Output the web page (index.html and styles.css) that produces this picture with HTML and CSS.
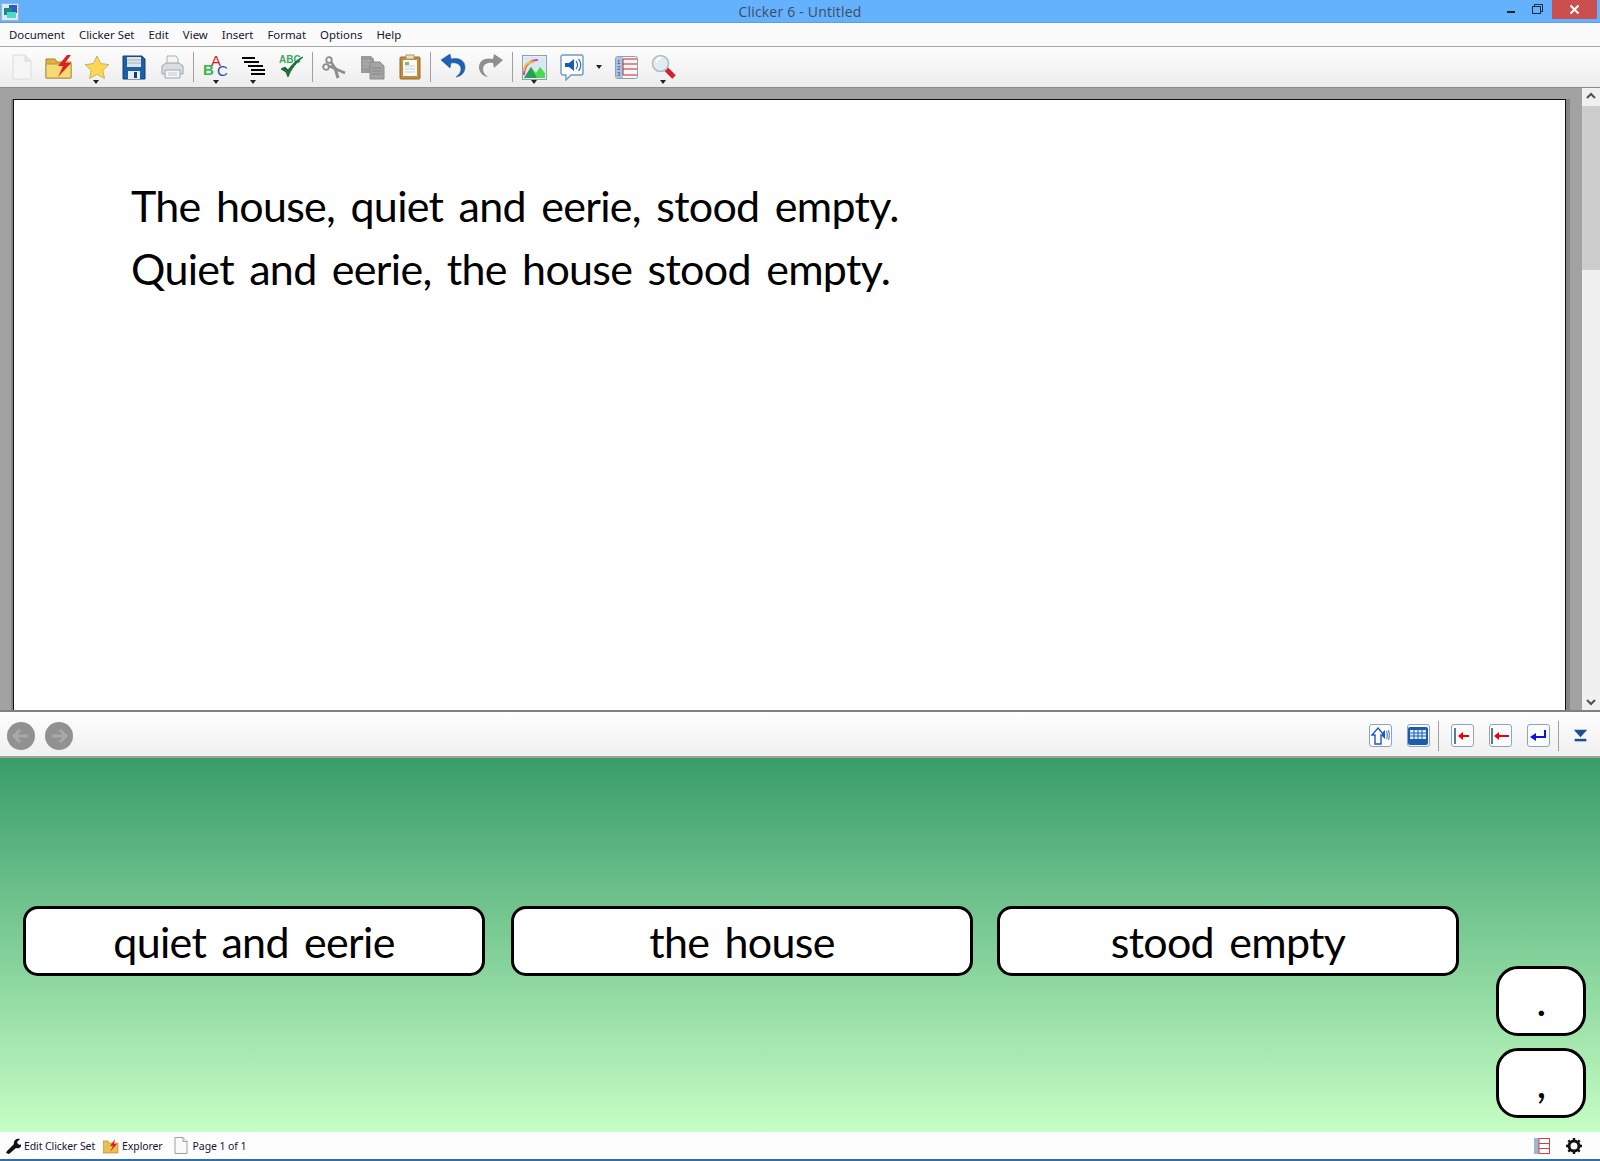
FILE: index.html
```html
<!DOCTYPE html>
<html lang="en">
  <head>
    <meta charset="UTF-8" />
    <title>Clicker 6 - Untitled</title>
    <link rel="stylesheet" href="styles.css">
  </head>
  <body>
    <header class="titlebar">
      <svg class="appicon" width="18" height="18" viewBox="0 0 18 18">
        <rect x="0.5" y="0.5" width="17" height="17" fill="#dfe8ee" stroke="#9fb4c4"/>
        <rect x="8" y="2" width="8" height="8" fill="#2a5fc0"/>
        <rect x="3" y="5" width="8" height="7" fill="#178a8a"/>
        <rect x="6" y="9" width="9" height="6" fill="#4fd8c8"/>
      </svg>
      <div class="title">Clicker 6 - Untitled</div>
      <div class="winbtns">
        <span class="minimize"></span>
        <span class="restore"></span>
        <span class="close">
          <svg width="11" height="11" viewBox="0 0 11 11"><path d="M1.5 1.5l8 8M9.5 1.5l-8 8" stroke="#fff" stroke-width="2"/></svg>
        </span>
      </div>
    </header>

    <nav class="menubar">
      <span>Document</span>
      <span>Clicker Set</span>
      <span>Edit</span>
      <span>View</span>
      <span>Insert</span>
      <span>Format</span>
      <span>Options</span>
      <span>Help</span>
    </nav>

    <div class="toolbar">
      <button class="tool">
        <svg width="24" height="28" viewBox="0 0 24 28"><path d="M3 2h12l6 6v18H3z" fill="#f6f6f6" stroke="#dcdcdc"/><path d="M15 2v6h6" fill="#e6e6e6" stroke="#dcdcdc"/></svg>
      </button>
      <button class="tool">
        <svg width="30" height="26" viewBox="0 0 30 26"><path d="M2 5h9l2 3h14v16H2z" fill="#e0b040" stroke="#a88230"/><path d="M2 10h25v14H2z" fill="#f7da78" stroke="#b8923c"/><path d="M23 1l-9 11h5l-5 11 13-14h-6l6-8z" fill="#e02020"/></svg>
      </button>
      <button class="tool caret">
        <svg width="26" height="24" viewBox="0 0 26 24"><path d="M13 1l3.600 7.600 8.400 1-6.200 5.700 1.700 8.200-7.500-4.200-7.500 4.200 1.700-8.200L1 9.600l8.400-1z" fill="#fbd84e" stroke="#c9b068"/></svg>
      </button>
      <button class="tool">
        <svg width="24" height="25" viewBox="0 0 24 25"><path d="M1 1h19l3 3v20H1z" fill="#1c5ea8" stroke="#123f78"/><rect x="5" y="2" width="14" height="10" fill="#dfe4e8"/><path d="M5 5h14M5 8h14" stroke="#a8b2bc"/><rect x="6" y="16" width="12" height="8" fill="#e8eef4"/><rect x="12" y="17" width="3" height="6" fill="#143f78"/></svg>
      </button>
      <button class="tool">
        <svg width="24" height="25" viewBox="0 0 24 25"><path d="M7 1h9l2 3v8H7z" fill="#f4f6f8" stroke="#a8b0b8"/><path d="M2 11l4-3h13l4 3v8H2z" fill="#d8dde2" stroke="#98a2ac"/><path d="M5 15h15v8H5z" fill="#f2f4f6" stroke="#a0a8b0"/><path d="M8 18h9M8 20h9" stroke="#c4cad0"/></svg>
      </button>
      <span class="sep first"></span>
      <button class="tool caret">
        <svg width="26" height="28" viewBox="0 0 26 28"><text class="abc-letters"><tspan x="8" y="13" class="letter-a">A</tspan><tspan x="0" y="22" class="letter-b">B</tspan><tspan x="14" y="23" class="letter-c">C</tspan></text></svg>
      </button>
      <button class="tool caret">
        <svg width="24" height="22" viewBox="0 0 24 22"><path d="M0 2h13M2 6h15M6 10h15M9 14h14M9 18h14" stroke="#000" stroke-width="2"/></svg>
      </button>
      <button class="tool">
        <svg width="26" height="26" viewBox="0 0 26 26"><text x="1" y="9" class="abc">ABC</text><path d="M3 15l5 3 2 5c3-8 8-14 15-20-7 3-11 8-15 13l-3-3z" fill="#1f6f3a" stroke="#1f6f3a"/></svg>
      </button>
      <span class="sep"></span>
      <button class="tool">
        <svg width="25" height="25" viewBox="0 0 25 25" fill="none" stroke="#8c8c8c" stroke-width="1.800"><circle cx="7" cy="5" r="2.800"/><circle cx="4" cy="12" r="2.800"/><path d="M9 7l6 9" stroke-width="2.600"/><path d="M7 11l16 7" stroke-width="2.600"/><path d="M13 13l3 10" stroke-width="3"/></svg>
      </button>
      <button class="tool">
        <svg width="25" height="25" viewBox="0 0 25 25"><path d="M1 1h10l3 3v14H1z" fill="#9a9a9a"/><path d="M3 6h8M3 9h8M3 12h6" stroke="#b8b8b8"/><path d="M10 7h10l4 4v13H10z" fill="#a4a4a4" stroke="#8c8c8c"/><path d="M12 13h10M12 16h10M12 19h10" stroke="#868686"/></svg>
      </button>
      <button class="tool">
        <svg width="22" height="26" viewBox="0 0 22 26"><rect x="1" y="3" width="20" height="22" rx="1" fill="#c28a3a" stroke="#9a6a28"/><rect x="4" y="6" width="14" height="16" fill="#f8fafa"/><path d="M6 12h10M6 15h10M6 18h10" stroke="#c8d0d0"/><rect x="6" y="8" width="4" height="3" fill="#70c070"/><rect x="7" y="1" width="8" height="4" fill="#e8e0c8" stroke="#b09860"/></svg>
      </button>
      <span class="sep third"></span>
      <button class="tool">
        <svg width="26" height="26" viewBox="0 0 26 26"><path d="M1 6l9 8 1-5c6-1 10 2 10 6 0 3-2 6-5 8 6-1 9-5 9-10 0-7-7-10-14-8l-1-5z" fill="#1c62b4" stroke="#154a88" stroke-width="0.500"/></svg>
      </button>
      <button class="tool">
        <svg width="26" height="26" viewBox="0 0 26 26"><path d="M25 6l-9 8-1-5c-6-1-10 2-10 6 0 3 2 6 5 8-6-1-9-5-9-10 0-7 7-10 14-8l1-5z" fill="#8f8f8f"/></svg>
      </button>
      <span class="sep"></span>
      <button class="tool caret">
        <svg width="25" height="25" viewBox="0 0 25 25"><rect x="0.500" y="0.500" width="24" height="24" fill="#e8eef2" stroke="#8ca0b0"/><path d="M2 2h21v20H2z" fill="#d8e8f0"/><path d="M2 20c0-9 6-15 14-15" fill="none" stroke="#e040b0" stroke-width="2"/><path d="M2 16c0-6 4-9 10-9" fill="none" stroke="#f0c030" stroke-width="2"/><path d="M2 23l7-11 5 6 4-6 5 6v5z" fill="#4cd850"/><path d="M2 23l7-11 6 11z" fill="#28a058"/></svg>
      </button>
      <button class="tool">
        <svg width="24" height="27" viewBox="0 0 24 27"><path d="M3 1h18a2 2 0 0 1 2 2v16a2 2 0 0 1-2 2H11l-5 5v-5H3a2 2 0 0 1-2-2V3a2 2 0 0 1 2-2z" fill="#fff" stroke="#6c9cc0" stroke-width="1.400"/><path d="M5 9h4l5-4v12l-5-4H5z" fill="#1c5cb0"/><path d="M16 7c2 2 2 6 0 8M18.500 5c3 3 3 9 0 12" fill="none" stroke="#3c6ca8" stroke-width="1.200"/></svg>
      </button>
      <span class="dropcaret"></span>
      <button class="tool">
        <svg width="23" height="23" viewBox="0 0 23 23"><rect x="0.500" y="0.500" width="22" height="22" rx="2" fill="#f4f6f8" stroke="#90a0b0"/><rect x="1" y="1" width="7" height="21" fill="#a8c4dc"/><path d="M8 3h14M8 8h14M8 13h14M8 19h14M8 3v16" stroke="#c02828" fill="none"/><text class="num"><tspan x="2" y="8">1</tspan><tspan x="2" y="14">2</tspan><tspan x="2" y="20">3</tspan></text></svg>
      </button>
      <button class="tool caret">
        <svg width="26" height="26" viewBox="0 0 26 26"><path d="M15 15l8 8" stroke="#d81e2c" stroke-width="5"/><circle cx="9.500" cy="9.500" r="8" fill="#e0ecf4" stroke="#b0bcc4" stroke-width="1.600"/><path d="M5 8c1-3 3-4 5-4" fill="none" stroke="#fff" stroke-width="2"/></svg>
      </button>
    </div>

    <main class="workspace">
      <div class="docarea">
        <div class="page">
          <p>The house, quiet and eerie, stood empty.</p>
          <p>Quiet and eerie, the house stood empty.</p>
        </div>
      </div>
      <div class="scrollbar">
        <svg class="arrow" width="18" height="16" viewBox="0 0 18 16"><path d="M5 10l4-4 4 4" fill="none" stroke="#505050" stroke-width="2"/></svg>
        <div class="track"><div class="thumb"></div></div>
        <svg class="arrow" width="18" height="16" viewBox="0 0 18 16"><path d="M5 6l4 4 4-4" fill="none" stroke="#505050" stroke-width="2"/></svg>
      </div>
    </main>

    <div class="navbar">
      <div class="navleft">
        <span class="round"><svg width="20" height="16" viewBox="0 0 20 16"><path d="M9 2L3 8l6 6M3 8h14" fill="none" stroke="#a8a8a8" stroke-width="3"/></svg></span>
        <span class="round"><svg width="20" height="16" viewBox="0 0 20 16"><path d="M11 2l6 6-6 6M17 8H3" fill="none" stroke="#a8a8a8" stroke-width="3"/></svg></span>
      </div>
      <div class="navright">
        <span class="keybtn"><svg width="20" height="20" viewBox="0 0 20 20"><path d="M8 2l6 7h-3v9H5V9H2z" fill="#fff" stroke="#1c5cb0" stroke-width="1.400"/><path d="M12 7l3-3v9l-3-3z" fill="#1c5cb0"/><path d="M16.500 5c1 2 1 6 0 8M18.500 4c1 3 1 8 0 10" fill="none" stroke="#3c6ca8"/></svg></span>
        <span class="keybtn"><svg width="20" height="18" viewBox="0 0 20 18"><rect x="0" y="0" width="20" height="18" rx="2" fill="#1c5cb0"/><path d="M2 3h16v9H2z" fill="#dfeefa"/><path d="M2 6h16M2 9h16M6 3v9M10 3v9M14 3v9" stroke="#1c5cb0"/></svg></span>
        <span class="sep"></span>
        <span class="keybtn"><svg width="20" height="18" viewBox="0 0 20 18"><path d="M3 1v16" stroke="#607890" stroke-width="2"/><path d="M6 9l5-4v3h6v2h-6v3z" fill="#f00000"/></svg></span>
        <span class="keybtn"><svg width="20" height="18" viewBox="0 0 20 18"><path d="M2 1v16" stroke="#607890" stroke-width="2"/><path d="M4 9l5-4v3h10v2H9v3z" fill="#f00000"/></svg></span>
        <span class="keybtn"><svg width="20" height="18" viewBox="0 0 20 18"><path d="M17 3v7H7" fill="none" stroke="#1010e0" stroke-width="2"/><path d="M2 10l6-4v8z" fill="#1010e0"/></svg></span>
        <span class="sep"></span>
        <svg class="collapse" width="15" height="13" viewBox="0 0 18 14"><path d="M1 0h16l-8 9z" fill="#1c4f94"/><rect x="2" y="11" width="14" height="3" fill="#1c4f94"/></svg>
      </div>
    </div>

    <section class="clickerset">
      <div class="cell word">quiet and eerie</div>
      <div class="cell word">the house</div>
      <div class="cell word">stood empty</div>
      <div class="punct">
        <div class="cell mark">.</div>
        <div class="cell mark">,</div>
      </div>
    </section>

    <footer class="statusbar">
      <span class="item">
        <svg width="16" height="16" viewBox="0 0 16 16"><path d="M1 15l1-2 7-7c-1-3 2-6 6-5l-3 3 1 2 2 1 2-2c0 4-3 6-6 5l-7 6z" fill="#111"/></svg>
        Edit Clicker Set
      </span>
      <span class="item">
        <svg width="16" height="16" viewBox="0 0 16 16"><path d="M0 3h5l1 2h9v10H0z" fill="#e8c050" stroke="#a88230" stroke-width="0.600"/><path d="M12 1L7 8h3l-3 6 7-8h-3z" fill="#e02020"/></svg>
        Explorer
      </span>
      <span class="item page-item">
        <svg width="14" height="17" viewBox="0 0 14 17"><path d="M1 0.500h8l4 4v12H1z" fill="#fafafa" stroke="#a0a0a0"/><path d="M9 0.500v4h4" fill="#e8e8e8" stroke="#a0a0a0"/></svg>
        Page 1 of 1
      </span>
      <span class="statusright">
        <svg width="16" height="16" viewBox="0 0 16 16"><rect x="0" y="0" width="5" height="16" fill="#9cb8d0"/><rect x="5" y="0.500" width="10.500" height="15" fill="#fff" stroke="#d84040"/><path d="M5 5.500h11M5 10.500h11" stroke="#d84040"/></svg>
        <svg width="16" height="16" viewBox="0 0 16 16"><circle cx="8" cy="8" r="5" fill="none" stroke="#111" stroke-width="3"/><path d="M8 0v3M8 13v3M0 8h3M13 8h3M2.300 2.300l2 2M11.700 11.700l2 2M13.700 2.300l-2 2M4.300 11.700l-2 2" stroke="#111" stroke-width="2.400"/></svg>
      </span>
    </footer>
  </body>
</html>
```

FILE: styles.css
```css
* {
  box-sizing: border-box;
}

body {
  margin: 0;
  height: 1161px;
  overflow: hidden;
  display: flex;
  flex-direction: column;
  font-family: "Noto Sans", sans-serif;
  background: #fff;
}

.titlebar {
  height: 23px;
  flex: none;
  position: relative;
  display: flex;
  align-items: flex-start;
  justify-content: center;
  background: #64b1fd;
  border-bottom: 1px solid #5a9fe4;
}

.appicon {
  position: absolute;
  left: 1px;
  top: 3px;
}

.title {
  font-family: "Open Sans", sans-serif;
  font-size: 14px;
  line-height: 23px;
  letter-spacing: 0.200px;
  color: #3f4c5f;
}

.winbtns {
  position: absolute;
  right: 3px;
  top: 0;
  display: flex;
  align-items: flex-start;
}

.minimize {
  width: 8px;
  height: 2px;
  margin-top: 11px;
  background: #222;
}

.restore {
  width: 9px;
  height: 8px;
  margin: 6px 11px 0 17px;
  border: 1px solid #1c2c44;
  box-shadow: 2px -2px 0 -1px #64b1fd, 2px -2px 0 0 #1c2c44;
}

.close {
  width: 45px;
  height: 19px;
  display: flex;
  align-items: center;
  justify-content: center;
  background: #c9504f;
}

.menubar {
  height: 24px;
  flex: none;
  display: flex;
  align-items: center;
  gap: 14px;
  padding-left: 9px;
  font-size: 11.400px;
  color: #16162c;
  background: #fbfbfb;
  border-bottom: 1px solid #a8a8a8;
}

.toolbar {
  height: 41px;
  flex: none;
  display: flex;
  align-items: center;
  padding-left: 3px;
  background: linear-gradient(#fdfdfd, #ededed);
  border-bottom: 1px solid #8c8c8c;
}

.tool {
  position: relative;
  width: 37.500px;
  height: 40px;
  flex: none;
  padding: 0;
  border: none;
  background: none;
  display: flex;
  align-items: center;
  justify-content: center;
}

.caret::after {
  content: "";
  position: absolute;
  left: 15px;
  bottom: 3px;
  border: 3px solid transparent;
  border-top: 4px solid #222;
  border-bottom: none;
}

.dropcaret {
  width: 17px;
  display: flex;
  justify-content: center;
}

.dropcaret::after {
  content: "";
  border: 3px solid transparent;
  border-top: 4px solid #222;
  border-bottom: none;
}

.sep {
  width: 1px;
  height: 30px;
  margin: 0 3px 0 2px;
  background: #a0a0a0;
  flex: none;
}

.sep.first {
  margin-right: 4px;
}

.sep.third {
  margin: 0 4px 0 1px;
}

.abc {
  font-size: 10px;
  font-weight: 700;
  fill: #3aa868;
}

.letter-a {
  font-size: 15px;
  fill: #d81e1e;
}

.letter-b {
  font-size: 15px;
  font-weight: 700;
  fill: #2eb84c;
}

.letter-c {
  font-size: 15px;
  fill: #2450b0;
}

.num {
  font-size: 6px;
  fill: #1c4f94;
}

.workspace {
  height: 624px;
  flex: none;
  display: flex;
  border-bottom: 2px solid #808080;
}

.docarea {
  flex: 1;
  padding: 11px 16px 0 13px;
  background: #a2a2a2;
}

.page {
  height: 100%;
  padding: 75px 0 0 117px;
  background: #fff;
  border: solid #111;
  border-width: 1px 1px 0 1px;
  box-shadow: 4px 0 0 #868686, -2px 0 0 #868686;
}

.page p,
.cell {
  font-family: Lato, sans-serif;
  font-size: 43px;
  letter-spacing: -0.700px;
  word-spacing: 5px;
  color: #000;
}

.page p {
  margin: 0;
  line-height: 62.500px;
  white-space: nowrap;
}

.scrollbar {
  width: 18px;
  flex: none;
  display: flex;
  flex-direction: column;
  background: #f0f0f0;
}

.arrow {
  flex: none;
}

.track {
  flex: 1;
  padding-top: 2px;
}

.thumb {
  height: 164px;
  background: #cdcdcd;
}

.navbar {
  height: 46px;
  flex: none;
  display: flex;
  justify-content: space-between;
  align-items: center;
  padding-top: 3px;
  background: linear-gradient(#fefefe, #f0f0f0);
  border-bottom: 2px solid #a0a0a0;
}

.navleft {
  display: flex;
  gap: 10px;
  padding-left: 7px;
}

.round {
  width: 28px;
  height: 28px;
  border-radius: 50%;
  display: flex;
  align-items: center;
  justify-content: center;
  background: #919191;
}

.navright {
  display: flex;
  align-items: center;
  padding-right: 12px;
}

.keybtn {
  width: 23px;
  height: 23px;
  margin: 0 7.500px;
  display: flex;
  align-items: center;
  justify-content: center;
  background: #fbfcfd;
  border: 1px solid #8ea4b8;
  border-radius: 3px;
}

.navright .sep {
  margin: 0 4px 0 1px;
}

.collapse {
  margin-left: 10px;
}

.clickerset {
  height: 374px;
  flex: none;
  display: flex;
  align-items: flex-start;
  padding: 148px 0 0 23px;
  background: linear-gradient(#399d6a, #c6fec4);
}

.cell {
  display: flex;
  justify-content: center;
  background: #fff;
  border: 3px solid #000;
  white-space: nowrap;
}

.word {
  width: 462px;
  height: 70px;
  margin-right: 24px;
  align-items: center;
  border-radius: 15px;
}

.word:first-child {
  margin-right: 26px;
}

.punct {
  display: flex;
  flex-direction: column;
  gap: 12px;
  margin: 60px 0 0 13px;
}

.mark {
  width: 90px;
  height: 70px;
  align-items: flex-end;
  border-radius: 22px;
  line-height: 66px;
}

.statusbar {
  flex: 1;
  display: flex;
  align-items: center;
  gap: 8px;
  padding: 0 18px 0 5px;
  font-size: 10.500px;
  letter-spacing: -0.100px;
  color: #14143a;
  background: #fdfdfd;
  border-bottom: 2px solid #2f6ea8;
}

.item {
  display: flex;
  align-items: center;
  gap: 3px;
}

.page-item {
  margin-left: 3px;
  gap: 5px;
}

.statusright {
  margin-left: auto;
  display: flex;
  gap: 16px;
}
```
